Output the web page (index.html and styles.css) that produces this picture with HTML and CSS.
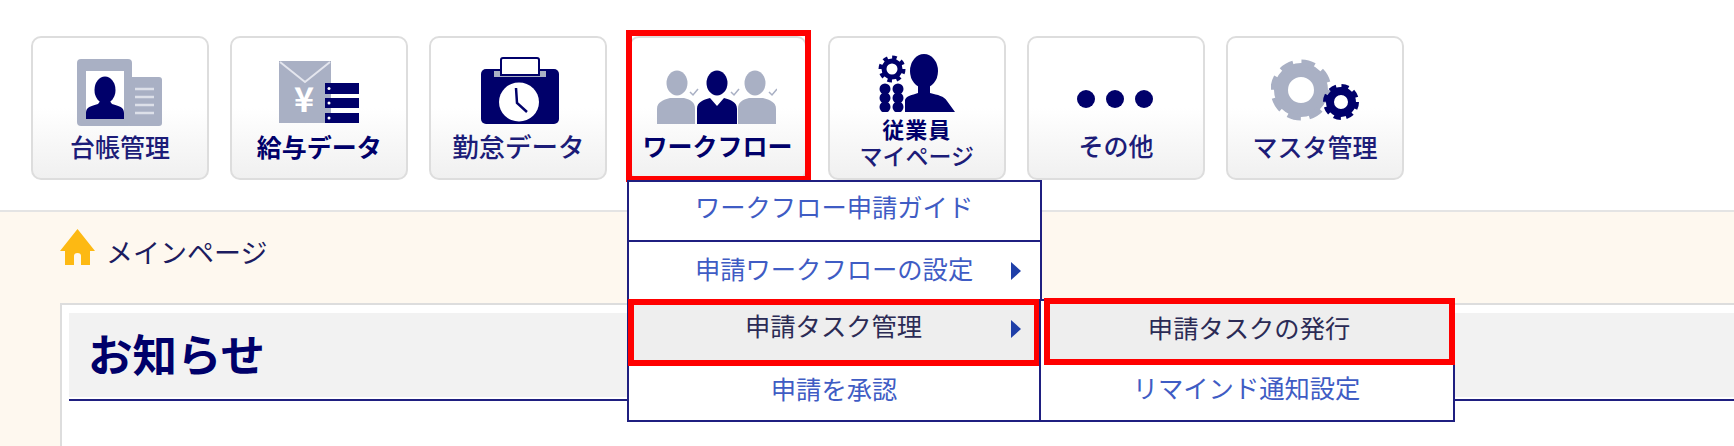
FILE: index.html
```html
<!DOCTYPE html>
<html lang="ja">
<head>
    <meta charset="UTF-8">
    <meta name="viewport" content="width=device-width, initial-scale=1.0">
    <title>メインページ</title>
    <link rel="stylesheet" href="styles.css">
</head>
<body>
    <nav class="nav">
        <div class="tile">
            <svg class="icon icon-card" viewBox="0 0 86 68">
                <rect x="50" y="18" width="35" height="49" rx="3" fill="#a9b0c4"/>
                <rect x="0" y="0" width="55" height="67" rx="4" fill="#a9b0c4"/>
                <rect x="9" y="12" width="38" height="48" fill="#fff"/>
                <ellipse cx="28" cy="31" rx="10.5" ry="13.5" fill="#00006a"/>
                <path d="M9 60v-6c0-6 5-7 12-9l3-4h8l3 4c7 2 12 3 12 9v6z" fill="#00006a"/>
                <path d="M58 30h19M58 38h19M58 46h19M58 54h19" stroke="#dde0e9" stroke-width="2.5"/>
            </svg>
            <span class="label">台帳管理</span>
        </div>
        <div class="tile">
            <svg class="icon icon-pay" viewBox="0 0 80 64">
                <rect x="0" y="1" width="52" height="62" fill="#a9b0c4"/>
                <path d="M1 2l25 20L51 2" fill="none" stroke="#e4e6ee" stroke-width="2"/>
                <text x="25" y="52" class="yen">¥</text>
                <rect x="46" y="23" width="34" height="11" fill="#00006a"/>
                <rect x="46" y="38" width="34" height="10" fill="#00006a"/>
                <rect x="46" y="53" width="34" height="10" fill="#00006a"/>
                <circle cx="50" cy="28.5" r="1.5" fill="#fff"/>
                <circle cx="50" cy="43" r="1.5" fill="#fff"/>
                <circle cx="50" cy="58" r="1.5" fill="#fff"/>
            </svg>
            <span class="label label-bold">給与データ</span>
        </div>
        <div class="tile">
            <svg class="icon icon-case" viewBox="0 0 78 68">
                <rect x="0" y="12" width="78" height="55" rx="5" fill="#00006a"/>
                <rect x="13" y="14" width="52" height="6" fill="#a9b0c4"/>
                <path d="M20 18V3q0-2 2-2h34q2 0 2 2v15z" fill="#fff" stroke="#00006a" stroke-width="2"/>
                <ellipse cx="38" cy="45" rx="20" ry="19.5" fill="#fff"/>
                <path d="M35 31l1 15 10 9" fill="none" stroke="#00006a" stroke-width="2.5"/>
            </svg>
            <span class="label label-wide">勤怠データ</span>
        </div>
        <div class="tile tile-marked">
            <svg class="icon icon-flow" viewBox="0 0 120 54">
                <g fill="#a9b0c4">
                    <ellipse cx="20" cy="13" rx="10.5" ry="12.5"/>
                    <path d="M0 54V39c0-7 6-9 13-11h14c7 2 11 4 11 11v15z"/>
                    <ellipse cx="98" cy="13" rx="10.5" ry="12.5"/>
                    <path d="M81 54V39c0-7 4-9 11-11h14c7 2 13 4 13 11v15z"/>
                </g>
                <ellipse cx="60" cy="13" rx="10.5" ry="12.5" fill="#00006a"/>
                <path d="M40 54V39c0-7 6-9 13-11l7 8 7-8c7 2 13 4 13 11v15z" fill="#00006a"/>
                <path d="M33 22l3 3 5-6M74 22l3 3 5-6M112 22l3 3 5-6" fill="none" stroke="#a9b0c4" stroke-width="1.5"/>
            </svg>
            <span class="label label-bold">ワークフロー</span>

            <ul class="menu">
                <li class="menu-item">ワークフロー申請ガイド</li>
                <li class="menu-item has-sub">申請ワークフローの設定</li>
                <li class="menu-item has-sub is-marked">
                    申請タスク管理
                    <ul class="menu submenu">
                        <li class="menu-item is-marked">申請タスクの発行</li>
                        <li class="menu-item">リマインド通知設定</li>
                    </ul>
                </li>
                <li class="menu-item">申請を承認</li>
            </ul>
        </div>
        <div class="tile tile-double">
            <svg class="icon icon-staff" viewBox="0 0 78 58">
                <circle cx="14" cy="15" r="8" fill="none" stroke="#00006a" stroke-width="5"/>
                <circle cx="14" cy="15" r="11.5" fill="none" stroke="#00006a" stroke-width="4" stroke-dasharray="4.5 4.5"/>
                <g fill="#00006a">
                    <circle cx="7" cy="35" r="5.500"/><circle cx="20" cy="35" r="5.500"/>
                    <circle cx="7" cy="44" r="5.500"/><circle cx="20" cy="44" r="5.500"/>
                    <circle cx="7" cy="53" r="5.500"/><circle cx="20" cy="53" r="5.500"/>
                    <ellipse cx="46" cy="17" rx="14" ry="17"/>
                    <path d="M27 58V46c1-4 7-5 13-7v-8h12v8c8 2 14 3 17 8l8 11z"/>
                </g>
            </svg>
            <span class="label label-small label-bold">従業員</span>
            <span class="label label-small">マイページ</span>
        </div>
        <div class="tile">
            <svg class="icon icon-more" viewBox="0 0 76 18">
                <circle cx="9" cy="9" r="9" fill="#00006a"/>
                <circle cx="38" cy="9" r="9" fill="#00006a"/>
                <circle cx="67" cy="9" r="9" fill="#00006a"/>
            </svg>
            <span class="label">その他</span>
        </div>
        <div class="tile">
            <svg class="icon icon-gears" viewBox="0 0 90 64">
                <circle cx="30" cy="32" r="20" fill="none" stroke="#a9b0c4" stroke-width="14"/>
                <circle cx="30" cy="32" r="27" fill="none" stroke="#a9b0c4" stroke-width="7" stroke-dasharray="13 8.2"/>
                <circle cx="70" cy="44" r="11" fill="none" stroke="#00006a" stroke-width="8"/>
                <circle cx="70" cy="44" r="15.500" fill="none" stroke="#00006a" stroke-width="5" stroke-dasharray="7 5.170"/>
            </svg>
            <span class="label">マスタ管理</span>
        </div>
    </nav>

    <main class="main">
        <div class="breadcrumb">
            <svg class="home" viewBox="0 0 35 36">
                <path d="M17.500 0L35 22h-5v14h-9V27q0-3-3.500-3T14 27v9H5V22H0z" fill="#fdb913"/>
            </svg>
            <span>メインページ</span>
        </div>
        <section class="panel">
            <h2 class="panel-title">お知らせ</h2>
        </section>
    </main>
</body>
</html>
```

FILE: styles.css
```css
html, body {
    margin: 0;
    height: 446px;
    overflow: hidden;
    background: #fff;
    font-family: "Noto Sans CJK JP", "Noto Sans", sans-serif;
}

/* top buttons */
.nav {
    display: flex;
    gap: 21.2px;
    height: 210px;
    box-sizing: border-box;
    padding: 36px 0 0 31px;
}
.tile {
    position: relative;
    box-sizing: border-box;
    width: 178px;
    height: 144px;
    padding-top: 20px;
    display: flex;
    flex-direction: column;
    align-items: center;
    border: 2px solid #ddd;
    border-radius: 10px;
    background: linear-gradient(#fff 50%, #f0f0f0);
}
.tile-marked::after {
    content: "";
    position: absolute;
    top: -8px;
    left: -5px;
    right: -6px;
    bottom: -4px;
    border: 6px solid #f00;
    pointer-events: none;
}
.tile-double {
    padding-top: 16px;
}
.icon {
    display: block;
    height: 68px;
    flex: none;
}
.icon-card { width: 86px; margin-top: 1px; margin-bottom: -1px; }
.icon-pay { width: 80px; height: 64px; margin: 2px 0 2px; }
.icon-case { width: 78px; margin: -1px 0 1px 4px; }
.icon-flow { width: 120px; height: 54px; margin: 12px 0 1px -2px; }
.icon-staff { width: 78px; height: 58px; }
.icon-more { width: 76px; height: 18px; margin: 32px 0 17px -2px; }
.icon-gears { width: 90px; height: 64px; margin: 0 0 4px 2px; }
.yen {
    fill: #fff;
    font-size: 34px;
    font-weight: 700;
    text-anchor: middle;
}
.label {
    font-size: 25px;
    line-height: 36px;
    font-weight: 500;
    color: #1c1c78;
    white-space: nowrap;
    margin-top: 2px;
}
.label-bold {
    font-weight: 700;
    color: #00006a;
}
.label-wide {
    font-size: 26.5px;
}
.label-small {
    font-size: 23px;
    line-height: 27px;
    margin-top: 0;
}
.tile-double .label-bold {
    margin-top: 3px;
    font-size: 22px;
    letter-spacing: 1px;
}

/* dropdown */
.menu {
    position: absolute;
    top: 142px;
    left: -4px;
    z-index: 2;
    box-sizing: border-box;
    width: 415px;
    margin: 0;
    padding: 0;
    list-style: none;
    background: #fff;
    border: 2px solid #1f1f80;
}
.menu-item {
    position: relative;
    box-sizing: border-box;
    height: 60px;
    display: flex;
    align-items: center;
    justify-content: center;
    padding-bottom: 6px;
    font-size: 25.3px;
    color: #3f5cc4;
    border-bottom: 2px solid #1f1f80;
}
.menu-item:first-child {
    padding-bottom: 10px;
}
.menu-item:last-child {
    height: 56px;
    border-bottom: none;
    padding-bottom: 8px;
}
.has-sub::after {
    content: "";
    position: absolute;
    right: 19px;
    top: 50%;
    margin-top: -9px;
    border-left: 10px solid #1f3fa8;
    border-top: 9px solid transparent;
    border-bottom: 9px solid transparent;
}
.menu-item.is-marked {
    height: 67px;
    margin: -3px 0 -2px -1px;
    color: #2b2b55;
    background: #eee;
    border: 6px solid #f00;
    padding: 0 0 16px;
    z-index: 1;
}
.menu-item.is-marked::after {
    right: 13px;
    margin-top: -13px;
}
.submenu {
    top: -6px;
    left: 405px;
    width: 416px;
    z-index: 0;
}
.submenu .menu-item.is-marked {
    margin: -3px -2px -2px 3px;
    padding-bottom: 10px;
}
.submenu .menu-item:last-child {
    padding-bottom: 9px;
    height: 57px;
}

/* page body */
.main {
    height: 236px;
    box-sizing: border-box;
    padding-left: 60px;
    background: #fef8ef;
    border-top: 2px solid #e4e4e4;
}
.breadcrumb {
    display: flex;
    align-items: center;
    gap: 11px;
    height: 91px;
    padding-bottom: 28px;
    box-sizing: border-box;
    padding-top: 16px;
    font-size: 27px;
    color: #1c1c60;
}
.home {
    width: 35px;
    height: 36px;
    margin-bottom: 10px;
}
.panel {
    height: 143px;
    box-sizing: border-box;
    padding: 8px 0 0 7px;
    background: #fff;
    border-top: 2px solid #ddd;
    border-left: 2px solid #ddd;
}
.panel-title {
    margin: 0;
    box-sizing: border-box;
    height: 88px;
    padding: 0 0 2px;
    text-indent: 19px;
    font-size: 44.5px;
    line-height: 80px;
    font-weight: 700;
    color: #00006a;
    background: #f2f2f2;
    background-clip: content-box;
    border-bottom: 2px solid #1f1f80;
}
```
